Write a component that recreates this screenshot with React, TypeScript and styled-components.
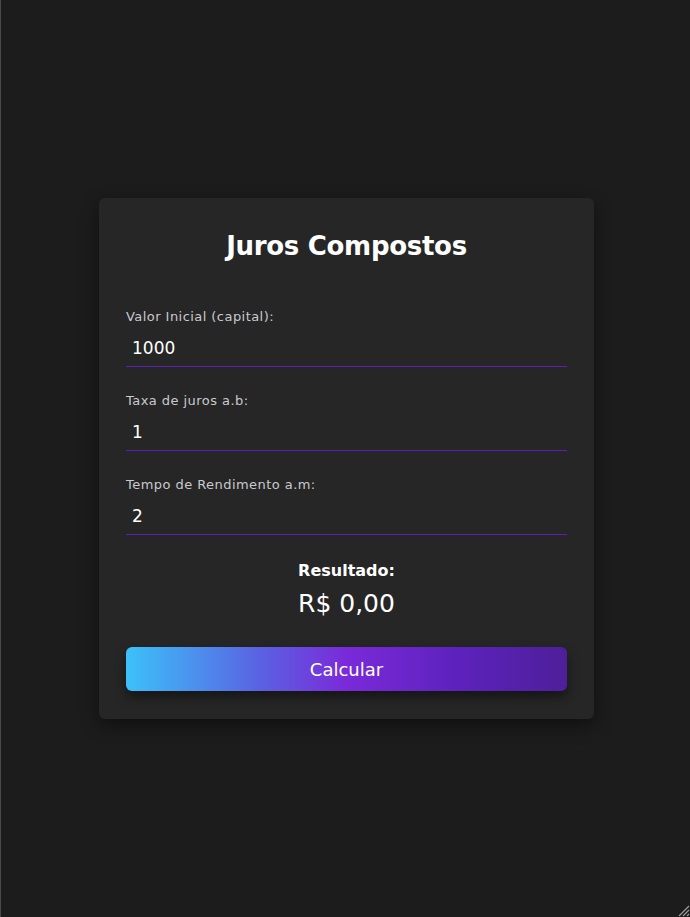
import React, { useState } from "react";
import styled, { createGlobalStyle } from "styled-components";

const GlobalStyle = createGlobalStyle`
  * { box-sizing: border-box; }
  body {
    margin: 0;
    background: #1c1c1c;
    font-family: "DejaVu Sans", "Open Sans", sans-serif;
  }
`;

const Page = styled.div`
  position: relative;
  min-height: 100vh;
  display: flex;
  align-items: center;
  justify-content: center;
  border-left: 1px solid #4a4a4a;
  padding-left: 2px;
`;

const Card = styled.div`
  width: 495px;
  background: #262626;
  border-radius: 6px;
  padding: 29px 27px 28px;
  box-shadow: 0 6px 18px rgba(0, 0, 0, 0.45);
`;

const Title = styled.h2`
  margin: 0 0 41px;
  text-align: center;
  color: #ffffff;
  font-size: 26px;
  line-height: 39px;
  font-weight: 700;
  letter-spacing: -0.3px;
`;

const Field = styled.div`
  display: flex;
  flex-direction: column;
  margin-bottom: 24px;
`;

const Label = styled.label`
  color: #c9c9cf;
  font-size: 13px;
  line-height: 20px;
  letter-spacing: 0.45px;
`;

const InputLine = styled.div`
  margin-top: 2px;
  border-bottom: 1px solid #5b1fb8;
`;

const Input = styled.input`
  display: block;
  width: 100%;
  height: 37px;
  padding: 0 6px;
  background: transparent;
  border: none;
  color: #ffffff;
  font-family: inherit;
  font-size: 17px;
  outline: none;
`;

const Result = styled.div`
  display: flex;
  flex-direction: column;
  align-items: center;
  margin: 2px 0 25px;
`;

const ResultLabel = styled.span`
  color: #ffffff;
  font-size: 16px;
  line-height: 24px;
  font-weight: 700;
`;

const ResultValue = styled.span`
  margin-top: 3px;
  color: #ffffff;
  font-size: 25px;
  line-height: 36px;
  font-weight: 400;
`;

const Button = styled.button`
  width: 100%;
  height: 44px;
  border: none;
  border-radius: 6px;
  background: linear-gradient(90deg, #3cc1f9 0%, #5a63e2 30%, #7a2ad9 50%, #5d22bd 75%, #4e1f9a 100%);
  color: #ffffff;
  font-family: inherit;
  font-size: 18px;
  box-shadow: 0 6px 12px rgba(0, 0, 0, 0.45);
  cursor: pointer;
`;

const Grip = styled.svg`
  position: absolute;
  right: 0;
  bottom: 0;
`;

export default function App() {
  const [capital, setCapital] = useState("1000");
  const [taxa, setTaxa] = useState("1");
  const [tempo, setTempo] = useState("2");

  return (
    <>
      <GlobalStyle />
      <Page>
        <Card>
          <Title>Juros Compostos</Title>
          <Field>
            <Label>Valor Inicial (capital):</Label>
            <InputLine>
              <Input value={capital} onChange={(e) => setCapital(e.target.value)} />
            </InputLine>
          </Field>
          <Field>
            <Label>Taxa de juros a.b:</Label>
            <InputLine>
              <Input value={taxa} onChange={(e) => setTaxa(e.target.value)} />
            </InputLine>
          </Field>
          <Field>
            <Label>Tempo de Rendimento a.m:</Label>
            <InputLine>
              <Input value={tempo} onChange={(e) => setTempo(e.target.value)} />
            </InputLine>
          </Field>
          <Result>
            <ResultLabel>Resultado:</ResultLabel>
            <ResultValue>R$ 0,00</ResultValue>
          </Result>
          <Button>Calcular</Button>
        </Card>
        <Grip width="14" height="14" viewBox="0 0 14 14">
          <path d="M13 3 L3 13 M13 7 L7 13 M13 11 L11 13" stroke="#9a9a9a" strokeWidth="1.2" />
        </Grip>
      </Page>
    </>
  );
}
